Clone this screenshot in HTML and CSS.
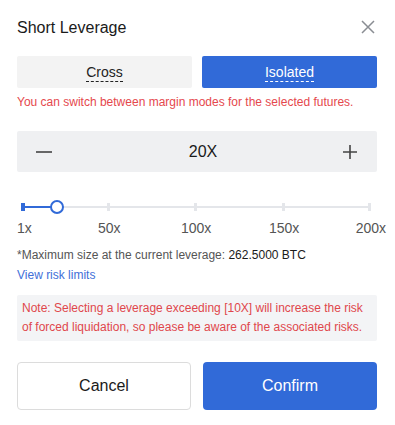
FILE: index.html
```html
<!DOCTYPE html>
<html>
<head>
<meta charset="utf-8">
<link rel="stylesheet" href="styles.css">
</head>
<body>
<div class="dialog">
  <div class="header">
    <div class="title">Short Leverage</div>
    <svg class="close" width="14" height="14" viewBox="0 0 14 14"><path d="M1 1L13 13M13 1L1 13" stroke="#8a8d93" stroke-width="1.5" fill="none"/></svg>
  </div>
  <div class="modes">
    <div class="mode"><span class="dashed">Cross</span></div>
    <div class="mode active"><span class="dashed">Isolated</span></div>
  </div>
  <div class="hint">You can switch between margin modes for the selected futures.</div>
  <div class="stepper">
    <svg width="16" height="16" viewBox="0 0 16 16"><path d="M0 8H16" stroke="#444" stroke-width="1.6"/></svg>
    <div class="value">20X</div>
    <svg width="16" height="16" viewBox="0 0 16 16"><path d="M1 8H15M8 1V15" stroke="#444" stroke-width="1.6"/></svg>
  </div>
  <div class="slider">
    <div class="track">
      <div class="fill"></div>
      <span class="tick t0"></span>
      <span class="tick t1"></span>
      <span class="tick t2"></span>
      <span class="tick t3"></span>
      <span class="tick t4"></span>
      <span class="thumb"></span>
    </div>
    <div class="labels">
      <span class="l0">1x</span>
      <span class="l1">50x</span>
      <span class="l2">100x</span>
      <span class="l3">150x</span>
      <span class="l4">200x</span>
    </div>
  </div>
  <div class="max">*Maximum size at the current leverage: <span class="strong">262.5000 BTC</span></div>
  <a class="risk">View risk limits</a>
  <div class="note">Note: Selecting a leverage exceeding [10X] will increase the risk of forced liquidation, so please be aware of the associated risks.</div>
  <div class="actions">
    <button class="btn cancel">Cancel</button>
    <button class="btn confirm">Confirm</button>
  </div>
</div>
</body>
</html>
```
FILE: styles.css
```css
* { box-sizing: border-box; }
html, body { margin: 0; padding: 0; background: #fff; }
body { font-family: "Liberation Sans", Arial, sans-serif; color: #222; }
.dialog { width: 395px; height: 425px; padding: 0 18px 0 17px; }
.header { display: flex; justify-content: space-between; align-items: center; height: 56px; padding-top: 0; }
.title { font-size: 16px; color: #1a1a1a; padding-top: 0; }
.close { margin-right: 2px; margin-top: -2px; }
.modes { display: flex; gap: 10px; }
.mode { flex: 1; height: 32px; background: #f3f3f3; border-radius: 2px; display: flex; align-items: center; justify-content: center; font-size: 14px; color: #222; }
.mode.active { background: #316ad8; color: #fff; }
.dashed { border-bottom: 1px dashed currentColor; line-height: 17px; padding-top: 2px; }
.hint { font-size: 12px; color: #e5484d; margin-top: 7px; line-height: 14px; }
.stepper { margin-top: 22px; height: 41px; background: #eff0f2; border-radius: 2px; display: flex; align-items: center; justify-content: space-between; padding: 0 19px; }
.stepper .value { font-size: 16px; color: #1a1a1a; padding-left: 12px; }
.slider { margin-top: 28px; }
.track { position: relative; height: 14px; margin: 0 6px 0 4px; }
.track::before { content: ""; position: absolute; left: 0; right: 0; top: 6px; height: 2px; background: #e4e6ea; }
.fill { position: absolute; left: 0; top: 6px; height: 2px; width: 35px; background: #316ad8; }
.tick { position: absolute; top: 3px; width: 3px; height: 8px; background: #e4e6ea; }
.t0 { left: 0; background: #316ad8; width: 4px; }
.t1 { left: 86px; }
.t2 { left: 173px; }
.t3 { left: 261px; }
.t4 { left: 347px; }
.thumb { position: absolute; left: 29px; top: 0; width: 14px; height: 14px; border-radius: 50%; border: 2px solid #316ad8; background: #fff; }
.labels { position: relative; height: 20px; margin-top: 6px; font-size: 14px; color: #555; }
.labels span { position: absolute; top: 0; }
.l0 { left: 0; }
.l1 { left: 81px; }
.l2 { left: 164px; }
.l3 { left: 252px; }
.l4 { right: -9px; }
.max { font-size: 12px; color: #555; margin-top: 8px; line-height: 14px; }
.max .strong { color: #1a1a1a; }
.risk { display: block; font-size: 12px; color: #3f6fd8; margin-top: 6px; line-height: 14px; }
.note { margin-top: 13px; background: #f3f4f6; border-radius: 2px; padding: 4px 6px 4px 5px; font-size: 12px; line-height: 19px; color: #e0474c; }
.actions { display: flex; justify-content: space-between; margin-top: 21px; }
.btn { width: 174px; height: 48px; border-radius: 4px; font-family: "Liberation Sans", Arial, sans-serif; font-size: 16px; }
.cancel { background: #fff; border: 1px solid #dcdcdc; color: #1a1a1a; }
.confirm { background: #316ad8; border: none; color: #fff; }
```
